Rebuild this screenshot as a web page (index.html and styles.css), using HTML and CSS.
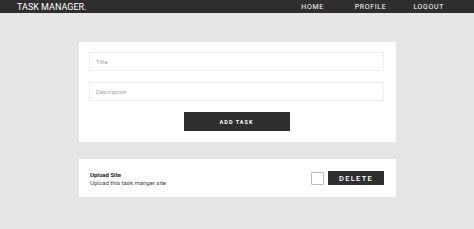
FILE: index.html
```html
<!DOCTYPE html>
<html>
<head>
<meta charset="utf-8">
<link rel="stylesheet" href="styles.css">
</head>
<body>
<div class="navbar">
  <div class="brand">TASK MANAGER.</div>
  <div class="links">
    <span class="link">HOME</span>
    <span class="link">PROFILE</span>
    <span class="link">LOGOUT</span>
  </div>
</div>

<div class="main">
  <div class="card form">
    <div class="field">Title</div>
    <div class="field">Description</div>
    <div class="add">ADD TASK</div>
  </div>

  <div class="card task">
    <div class="info">
      <div class="name">Upload Site</div>
      <div class="desc">Upload this task manger site</div>
    </div>
    <div class="box"></div>
    <div class="delete">DELETE</div>
  </div>
</div>
</body>
</html>
```

FILE: styles.css
```css
body {
  margin: 0;
  background-color: #e6e6e6;
  font-family: Roboto, "Liberation Sans", sans-serif;
}

.navbar {
  height: 13px;
  background-color: #2f2f2f;
  color: #fff;
  display: flex;
  align-items: center;
  justify-content: space-between;
  padding: 0 0 0 17px;
}

.brand {
  font-size: 9px;
  font-weight: 400;
}

.links {
  display: flex;
  padding-right: 30px;
}

.link {
  font-size: 7px;
  font-weight: 400;
  letter-spacing: 0.65px;
  margin-left: 31px;
}

.link:nth-child(3) {
  margin-left: 27px;
}

.main {
  width: 317px;
  margin: 29px 0 0 79px;
}

.card {
  background-color: #fff;
}

.form {
  padding: 10px 12px 11px 10px;
  display: flex;
  flex-direction: column;
  align-items: center;
}

.field {
  align-self: stretch;
  height: 19px;
  border: 1px solid #efefef;
  box-sizing: border-box;
  font-size: 6px;
  color: #a5a5a5;
  padding-left: 6px;
  display: flex;
  align-items: center;
  margin-bottom: 11px;
}

.add {
  width: 106px;
  height: 19px;
  background-color: #2f2f2f;
  color: #fff;
  font-size: 5.5px;
  font-weight: 700;
  letter-spacing: 1px;
  display: flex;
  align-items: center;
  justify-content: center;
}

.task {
  margin-top: 17px;
  height: 38px;
  display: flex;
  align-items: center;
  padding: 0 12px 0 11px;
}

.info {
  flex: 1;
  font-size: 6px;
  line-height: 8px;
  color: #222;
  padding-top: 1px;
}

.name {
  font-weight: 700;
}

.desc {
  color: #444;
}

.box {
  width: 11px;
  height: 11px;
  border: 1px solid #bdbdbd;
  border-radius: 1px;
  margin-right: 4px;
}

.delete {
  width: 56px;
  height: 14px;
  background-color: #2f2f2f;
  color: #fff;
  font-size: 7.5px;
  font-weight: 500;
  letter-spacing: 1.3px;
  display: flex;
  align-items: center;
  justify-content: center;
}
```
